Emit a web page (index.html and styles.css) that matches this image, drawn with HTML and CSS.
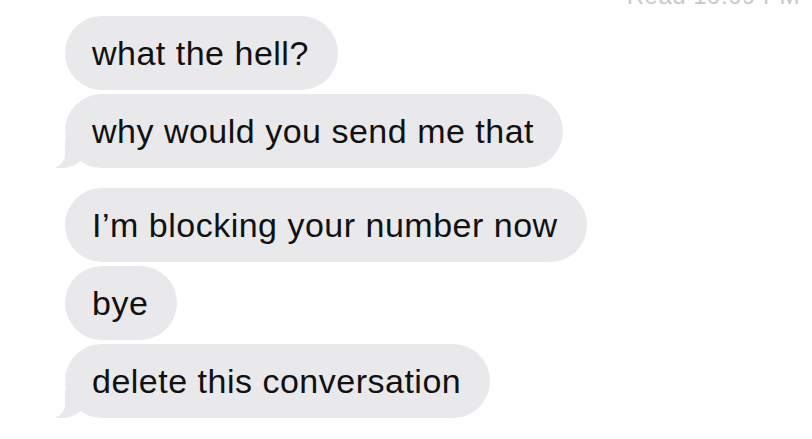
FILE: index.html
```html
<!DOCTYPE html>
<html>
<head>
<meta charset="utf-8">
<link rel="stylesheet" href="styles.css">
</head>
<body>
<div class="status"><span>Read 10:09 PM</span></div>
<div class="thread">
  <div class="bubble">what the hell?</div>
  <div class="bubble tail">why would you send me that</div>
  <div class="bubble group">I’m blocking your number now</div>
  <div class="bubble">bye</div>
  <div class="bubble tail">delete this conversation</div>
</div>
</body>
</html>
```
FILE: styles.css
```css
html, body {
  margin: 0;
  padding: 0;
  background: #ffffff;
}
body {
  width: 812px;
  height: 439px;
  overflow: hidden;
  font-family: "Liberation Sans", Arial, sans-serif;
}
.status {
  height: 8px;
  overflow: hidden;
  display: flex;
  justify-content: flex-end;
  align-items: flex-end;
  padding-right: 12px;
  margin-bottom: 8px;
  color: #c9c9cc;
  font-size: 24px;
  line-height: 24px;
  letter-spacing: 0.5px;
}
.status span {
  white-space: nowrap;
}
.thread {
  display: flex;
  flex-direction: column;
  align-items: flex-start;
  gap: 4px;
  padding-left: 65px;
}
.bubble {
  position: relative;
  background: #e9e9eb;
  color: #111111;
  font-size: 34px;
  line-height: 40px;
  letter-spacing: 0.5px;
  padding: 17px 29px 17px 27px;
  border-radius: 37px;
  white-space: nowrap;
}
.bubble.group {
  margin-top: 16px;
}
.bubble.tail::before {
  content: "";
  position: absolute;
  left: -9px;
  bottom: 0;
  width: 30px;
  height: 28px;
  background: #e9e9eb;
  border-bottom-right-radius: 24px 20px;
}
.bubble.tail::after {
  content: "";
  position: absolute;
  left: -40px;
  bottom: 0;
  width: 40px;
  height: 30px;
  background: #ffffff;
  border-bottom-right-radius: 14px;
}
```
